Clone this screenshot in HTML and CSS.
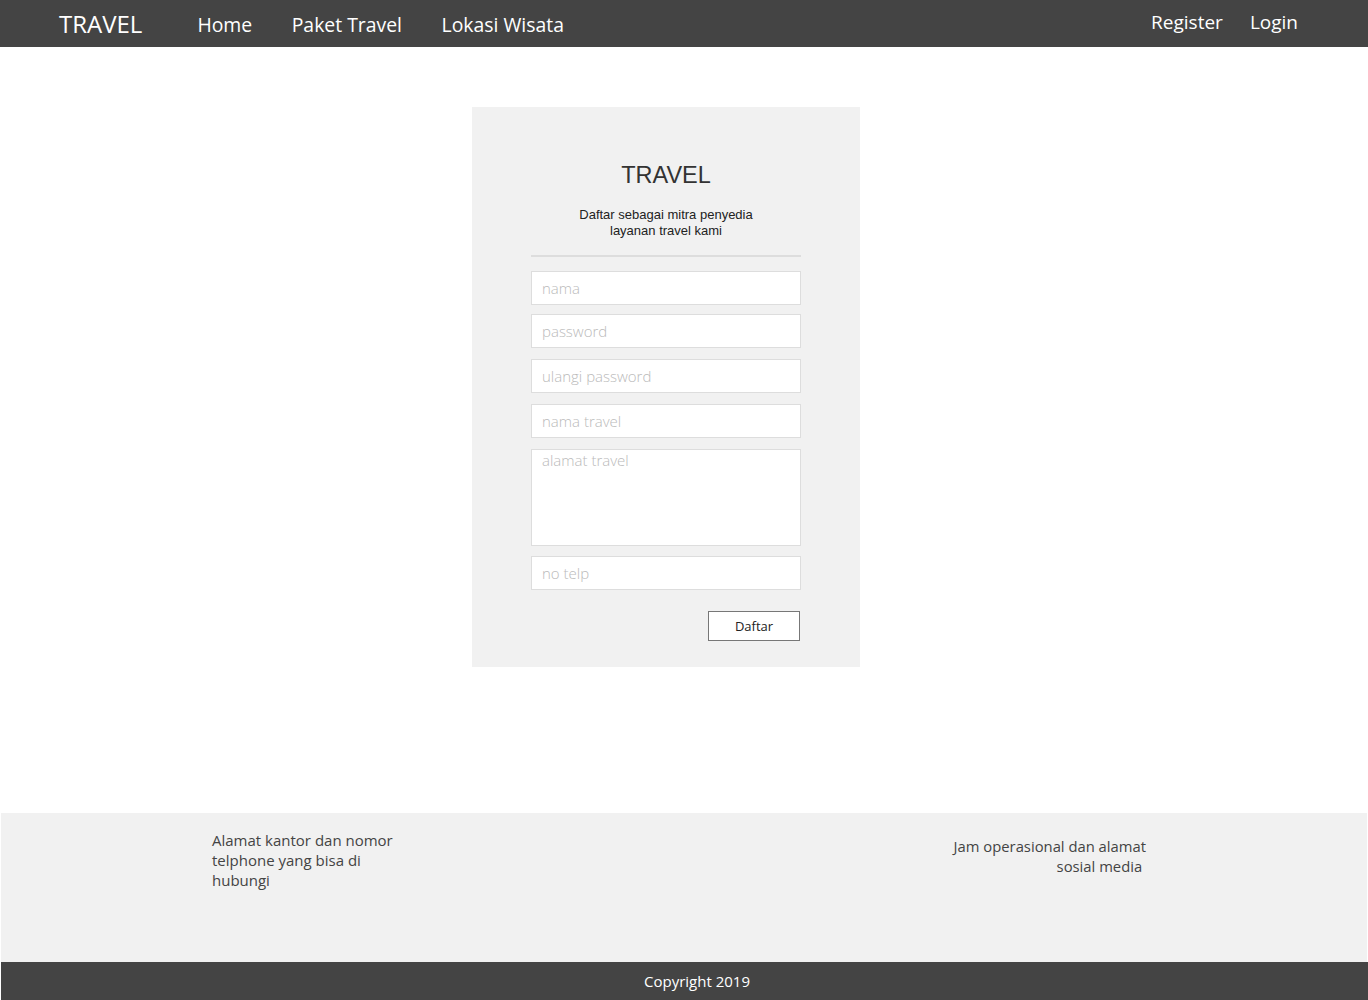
FILE: index.html
```html
<!DOCTYPE html>
<html>
<head>
<meta charset="utf-8">
<title>Travel - Daftar</title>
<link rel="stylesheet" href="styles.css">
</head>
<body>
<nav class="nav">
  <a class="brand" href="#">TRAVEL</a>
  <div class="menu">
    <a href="#">Home</a>
    <a href="#">Paket Travel</a>
    <a href="#">Lokasi Wisata</a>
  </div>
  <div class="auth">
    <a href="#">Register</a>
    <a href="#">Login</a>
  </div>
</nav>
<main class="main">
  <form class="card">
    <h1 class="title">TRAVEL</h1>
    <p class="sub">Daftar sebagai mitra penyedia<br>layanan travel kami</p>
    <div class="rule"></div>
    <input class="field f1" type="text" placeholder="nama">
    <input class="field f2" type="password" placeholder="password">
    <input class="field f3" type="password" placeholder="ulangi password">
    <input class="field f3" type="text" placeholder="nama travel">
    <textarea class="field area" placeholder="alamat travel"></textarea>
    <input class="field f4" type="text" placeholder="no telp">
    <div class="actions"><button type="button" class="btn">Daftar</button></div>
  </form>
</main>
<footer class="footer">
  <div class="info">
    <p class="left">Alamat kantor dan nomor telphone yang bisa di hubungi</p>
    <p class="right">Jam operasional dan alamat<br>sosial media&nbsp;</p>
  </div>
  <div class="copy">Copyright 2019</div>
</footer>
</body>
</html>
```
FILE: styles.css
```css
* { box-sizing: border-box; }
body {
  margin: 0;
  font-family: "Open Sans", "Liberation Sans", sans-serif;
  background: #fff;
}
a { text-decoration: none; color: #fff; }
.nav {
  height: 47px;
  background: #444;
  display: flex;
  align-items: center;
  padding-left: 59px;
  padding-right: 70px;
}
.brand {
  font-size: 24px;
  color: #fff;
  margin-top: -1px;
}
.menu {
  display: flex;
  margin-left: 55px;
  gap: 39.5px;
  font-size: 19.4px;
  margin-top: 1px;
}
.auth {
  margin-left: auto;
  display: flex;
  gap: 27px;
  font-size: 19px;
  margin-top: -3px;
}
.main {
  height: 766px;
  padding-top: 60px;
  display: flex;
  justify-content: center;
}
.card {
  width: 388px;
  height: 560px;
  margin-left: -36px;
  background: #f1f1f1;
  display: flex;
  flex-direction: column;
  align-items: center;
  padding-top: 54px;
}
.title {
  margin: 0;
  font-family: "Liberation Sans", Arial, sans-serif;
  font-weight: normal;
  font-size: 23.5px;
  line-height: 28px;
  color: #333;
}
.sub {
  margin: 18px 0 0;
  font-family: "Liberation Sans", Arial, sans-serif;
  font-size: 13px;
  line-height: 16px;
  text-align: center;
  color: #222;
}
.rule {
  width: 270px;
  height: 2px;
  background: #ddd;
  margin-top: 16px;
}
.field {
  width: 270px;
  height: 34px;
  border: 1px solid #ddd;
  background: #fff;
  font-family: "Open Sans", "Liberation Sans", sans-serif;
  font-weight: 300;
  font-size: 15px;
  padding: 0 10px;
  color: #333;
  outline: none;
}
.field::placeholder { color: #bababa; }
.f1 { margin-top: 14px; }
.f2 { margin-top: 9px; }
.f3 { margin-top: 11px; }
.area {
  margin-top: 11px;
  height: 97px;
  resize: none;
  padding-top: 0;
  line-height: 20px;
}
.f4 { margin-top: 10px; }
.actions {
  width: 270px;
  display: flex;
  justify-content: flex-end;
  margin-top: 21px;
}
.btn {
  width: 92px;
  height: 30px;
  margin-right: 1px;
  background: #fff;
  border: 1px solid #777;
  font-family: "Open Sans", "Liberation Sans", sans-serif;
  font-size: 13px;
  color: #222;
  padding: 0;
}
.footer {
  padding-left: 1px;
}
.info {
  height: 149px;
  background: #f1f1f1;
  margin-right: 1px;
  display: flex;
  justify-content: space-between;
  padding: 17px 0 0 211px;
  padding-right: 221px;
  color: #444;
  font-size: 15px;
  line-height: 20px;
}
.info p { margin: 0; }
.left { width: 185px; }
.right { text-align: right; margin-top: 6px !important; font-size: 14.8px; }
.copy {
  height: 38px;
  background: #444;
  color: #fff;
  text-align: center;
  font-size: 15px;
  line-height: 38px;
  padding-left: 24px;
  margin-right: -1px;
}
```
